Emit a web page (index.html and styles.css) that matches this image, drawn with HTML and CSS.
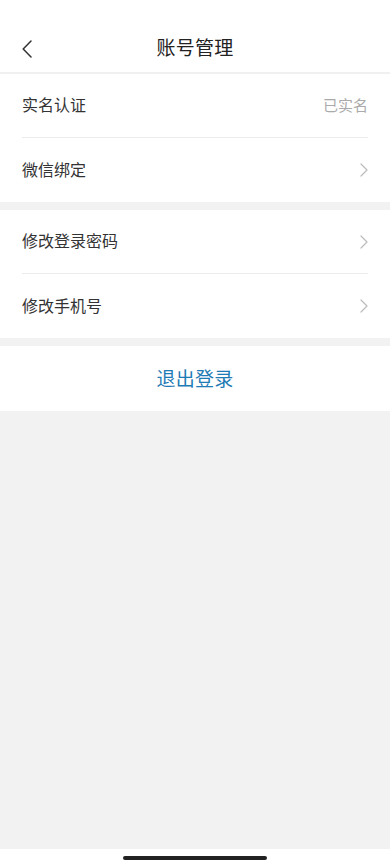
FILE: index.html
```html
<!DOCTYPE html>
<html lang="zh-CN">
<head>
<meta charset="utf-8">
<meta name="viewport" content="width=device-width, initial-scale=1">
<title>账号管理</title>
<link rel="stylesheet" href="styles.css">
</head>
<body>
<div class="page">
  <header class="header">
    <div class="nav">
      <span class="back" aria-label="返回">
        <svg width="10" height="18" viewBox="0 0 10 18"><path d="M9 1 L1.2 9 L9 17" fill="none" stroke="#333" stroke-width="1.5" stroke-linecap="round" stroke-linejoin="round"/></svg>
      </span>
      <h1 class="title">账号管理</h1>
    </div>
  </header>

  <section class="group">
    <div class="row divided">
      <span class="label">实名认证</span>
      <span class="value">已实名</span>
    </div>
    <div class="row">
      <span class="label">微信绑定</span>
      <svg class="arrow" width="8" height="14" viewBox="0 0 8 14"><path d="M1 1 L7 7 L1 13" fill="none" stroke="#bbb" stroke-width="1.2" stroke-linecap="round" stroke-linejoin="round"/></svg>
    </div>
  </section>

  <section class="group">
    <div class="row divided">
      <span class="label">修改登录密码</span>
      <svg class="arrow" width="8" height="14" viewBox="0 0 8 14"><path d="M1 1 L7 7 L1 13" fill="none" stroke="#bbb" stroke-width="1.2" stroke-linecap="round" stroke-linejoin="round"/></svg>
    </div>
    <div class="row">
      <span class="label">修改手机号</span>
      <svg class="arrow" width="8" height="14" viewBox="0 0 8 14"><path d="M1 1 L7 7 L1 13" fill="none" stroke="#bbb" stroke-width="1.2" stroke-linecap="round" stroke-linejoin="round"/></svg>
    </div>
  </section>

  <section class="group logout">
    <span class="logout-text">退出登录</span>
  </section>

  <div class="filler"></div>

  <div class="home-bar"><span class="indicator"></span></div>
</div>
</body>
</html>
```

FILE: styles.css
```css
* { box-sizing: border-box; margin: 0; padding: 0; }
html, body { background: #f2f2f2; }
body {
  font-family: "Noto Sans CJK SC", "Noto Sans", sans-serif;
  color: #333;
}
.page {
  width: 390px;
  min-height: 866px;
  display: flex;
  flex-direction: column;
  background: #f2f2f2;
}
.header {
  background: #fff;
  padding-top: 24px;
  border-bottom: 2px solid #f0f0f0;
}
.nav {
  height: 48px;
  position: relative;
  display: flex;
  align-items: center;
  justify-content: center;
  padding-bottom: 4px;
}
.back {
  position: absolute;
  left: 22px;
  top: 16px;
  width: 10px;
  height: 18px;
  display: flex;
}
.title {
  font-size: 19px;
  font-weight: 400;
  color: #222;
  letter-spacing: 0.3px;
  line-height: 1;
}
.group {
  background: #fff;
  margin-bottom: 8px;
}
.row {
  height: 64px;
  margin: 0 22px;
  display: flex;
  align-items: center;
  justify-content: space-between;
}
.row.divided {
  border-bottom: 1px solid #ececec;
}
.label {
  font-size: 16px;
  color: #333;
  line-height: 1;
  padding-bottom: 3px;
}
.value {
  font-size: 15px;
  color: #aaa;
  line-height: 1;
  padding-bottom: 3px;
}
.arrow { display: block; }
.logout {
  height: 65px;
  display: flex;
  align-items: center;
  justify-content: center;
  margin-bottom: 0;
}
.logout-text {
  font-size: 19px;
  color: #1f7bb5;
  letter-spacing: 0.3px;
  line-height: 1;
  padding-bottom: 2px;
}
.filler { flex: 1; }
.home-bar {
  height: 17px;
  background: #fff;
  display: flex;
  justify-content: center;
  padding-top: 7px;
}
.indicator {
  width: 144px;
  height: 4px;
  border-radius: 2px;
  background: #222;
}
```
